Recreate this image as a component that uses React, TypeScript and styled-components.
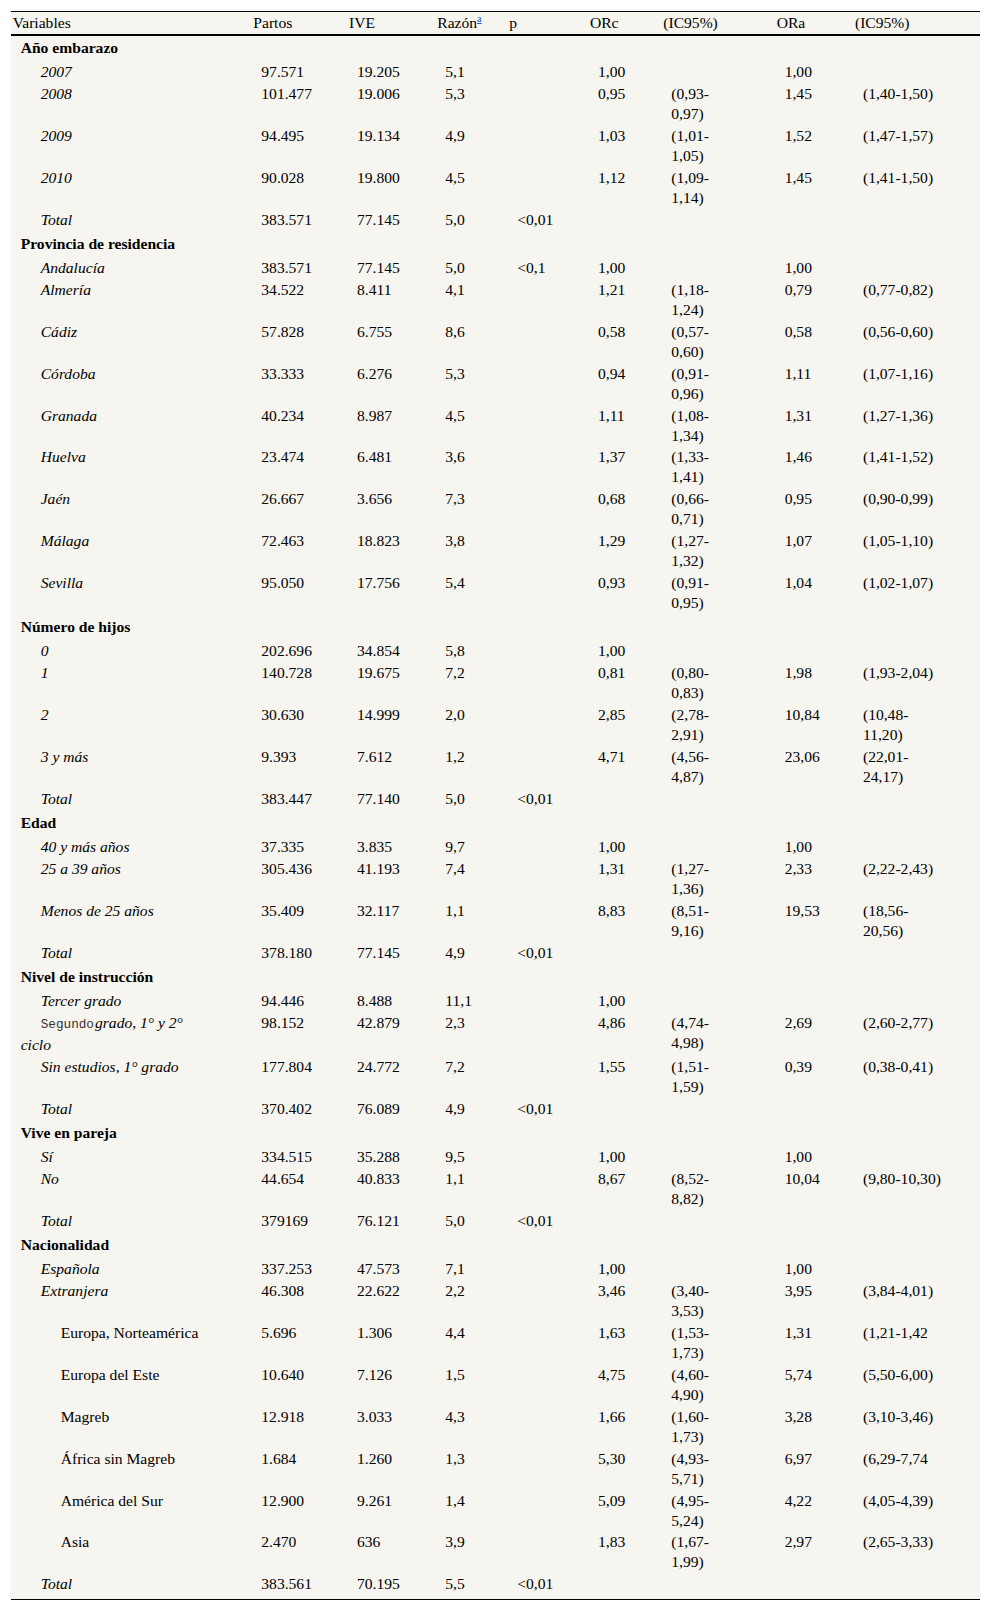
import React from 'react';
import styled, { createGlobalStyle } from 'styled-components';

const GlobalStyle = createGlobalStyle`
  html, body { margin: 0; padding: 0; background: #ffffff; }
  body { font-family: "Liberation Serif", "Times New Roman", serif; color: #000; }
`;

const Page = styled.div`
  padding: 11px 12px 12px 11px;
`;

const Table = styled.table`
  width: 969px;
  border-collapse: separate;
  border-spacing: 0;
  table-layout: fixed;
  background: #f7f5ef;
  font-size: 15.6px;
  line-height: 20px;
`;

const Col = styled.col<{ $w: number }>`
  width: ${p => p.$w}px;
`;

const HeadCell = styled.th`
  text-align: left;
  font-weight: normal;
  vertical-align: top;
  padding: 1px 2px 0.8px 1.7px;
  border-top: 1px solid #000;
  border-bottom: 2px solid #000;
  white-space: nowrap;
`;

const Sup = styled.sup`
  font-size: 10px;
  line-height: 0;
  vertical-align: 6px;
  a { color: #1f4fd1; text-decoration: underline; }
`;

const BodyRow = styled.tr<{ $end?: boolean }>`
  & > td {
    padding-bottom: ${p => (p.$end ? '2px' : '0.9px')};
  }
  &:last-child > td {
    padding-bottom: 5px;
    border-bottom: 1px solid #000;
  }
`;

const SectionCell = styled.td`
  font-weight: bold;
  vertical-align: top;
  padding: 2.3px 2px 3px 9.7px;
`;

const Cell = styled.td<{ $pr?: number }>`
  vertical-align: top;
  padding: 1px ${p => p.$pr ?? 2}px 0.9px 9.7px;
`;

const LabelCell = styled(Cell)<{ $level: number; $italic: boolean }>`
  text-indent: ${p => p.$level * 20}px;
  font-style: ${p => (p.$italic ? 'italic' : 'normal')};
`;

const Mono = styled.span`
  font-family: "Liberation Mono", "DejaVu Sans Mono", monospace;
  font-size: 12.7px;
  font-style: normal;
  color: #333;
  margin-right: 1px;
`;

type DataRow = {
  label: React.ReactNode;
  level?: number;
  plain?: boolean;
  end?: boolean;
  v: string[];
};

type Section = { title: string; rows: DataRow[] };

const sections: Section[] = [
  {
    title: 'Año embarazo',
    rows: [
      { label: '2007', v: ['97.571', '19.205', '5,1', '', '1,00', '', '1,00', ''] },
      { label: '2008', v: ['101.477', '19.006', '5,3', '', '0,95', '(0,93-0,97)', '1,45', '(1,40-1,50)'] },
      { label: '2009', v: ['94.495', '19.134', '4,9', '', '1,03', '(1,01-1,05)', '1,52', '(1,47-1,57)'] },
      { label: '2010', v: ['90.028', '19.800', '4,5', '', '1,12', '(1,09-1,14)', '1,45', '(1,41-1,50)'] },
      { label: 'Total', end: true, v: ['383.571', '77.145', '5,0', '<0,01', '', '', '', ''] },
    ],
  },
  {
    title: 'Provincia de residencia',
    rows: [
      { label: 'Andalucía', v: ['383.571', '77.145', '5,0', '<0,1', '1,00', '', '1,00', ''] },
      { label: 'Almería', v: ['34.522', '8.411', '4,1', '', '1,21', '(1,18-1,24)', '0,79', '(0,77-0,82)'] },
      { label: 'Cádiz', v: ['57.828', '6.755', '8,6', '', '0,58', '(0,57-0,60)', '0,58', '(0,56-0,60)'] },
      { label: 'Córdoba', v: ['33.333', '6.276', '5,3', '', '0,94', '(0,91-0,96)', '1,11', '(1,07-1,16)'] },
      { label: 'Granada', v: ['40.234', '8.987', '4,5', '', '1,11', '(1,08-1,34)', '1,31', '(1,27-1,36)'] },
      { label: 'Huelva', v: ['23.474', '6.481', '3,6', '', '1,37', '(1,33-1,41)', '1,46', '(1,41-1,52)'] },
      { label: 'Jaén', v: ['26.667', '3.656', '7,3', '', '0,68', '(0,66-0,71)', '0,95', '(0,90-0,99)'] },
      { label: 'Málaga', v: ['72.463', '18.823', '3,8', '', '1,29', '(1,27-1,32)', '1,07', '(1,05-1,10)'] },
      { label: 'Sevilla', end: true, v: ['95.050', '17.756', '5,4', '', '0,93', '(0,91-0,95)', '1,04', '(1,02-1,07)'] },
    ],
  },
  {
    title: 'Número de hijos',
    rows: [
      { label: '0', v: ['202.696', '34.854', '5,8', '', '1,00', '', '', ''] },
      { label: '1', v: ['140.728', '19.675', '7,2', '', '0,81', '(0,80-0,83)', '1,98', '(1,93-2,04)'] },
      { label: '2', v: ['30.630', '14.999', '2,0', '', '2,85', '(2,78-2,91)', '10,84', '(10,48-11,20)'] },
      { label: '3 y más', v: ['9.393', '7.612', '1,2', '', '4,71', '(4,56-4,87)', '23,06', '(22,01-24,17)'] },
      { label: 'Total', end: true, v: ['383.447', '77.140', '5,0', '<0,01', '', '', '', ''] },
    ],
  },
  {
    title: 'Edad',
    rows: [
      { label: '40 y más años', v: ['37.335', '3.835', '9,7', '', '1,00', '', '1,00', ''] },
      { label: '25 a 39 años', v: ['305.436', '41.193', '7,4', '', '1,31', '(1,27-1,36)', '2,33', '(2,22-2,43)'] },
      { label: 'Menos de 25 años', v: ['35.409', '32.117', '1,1', '', '8,83', '(8,51-9,16)', '19,53', '(18,56-20,56)'] },
      { label: 'Total', end: true, v: ['378.180', '77.145', '4,9', '<0,01', '', '', '', ''] },
    ],
  },
  {
    title: 'Nivel de instrucción',
    rows: [
      { label: 'Tercer grado', v: ['94.446', '8.488', '11,1', '', '1,00', '', '', ''] },
      {
        label: (
          <>
            <Mono>Segundo</Mono>grado, 1° y 2° ciclo
          </>
        ),
        v: ['98.152', '42.879', '2,3', '', '4,86', '(4,74-4,98)', '2,69', '(2,60-2,77)'],
      },
      { label: 'Sin estudios, 1° grado', v: ['177.804', '24.772', '7,2', '', '1,55', '(1,51-1,59)', '0,39', '(0,38-0,41)'] },
      { label: 'Total', end: true, v: ['370.402', '76.089', '4,9', '<0,01', '', '', '', ''] },
    ],
  },
  {
    title: 'Vive en pareja',
    rows: [
      { label: 'Sí', v: ['334.515', '35.288', '9,5', '', '1,00', '', '1,00', ''] },
      { label: 'No', v: ['44.654', '40.833', '1,1', '', '8,67', '(8,52-8,82)', '10,04', '(9,80-10,30)'] },
      { label: 'Total', end: true, v: ['379169', '76.121', '5,0', '<0,01', '', '', '', ''] },
    ],
  },
  {
    title: 'Nacionalidad',
    rows: [
      { label: 'Española', v: ['337.253', '47.573', '7,1', '', '1,00', '', '1,00', ''] },
      { label: 'Extranjera', v: ['46.308', '22.622', '2,2', '', '3,46', '(3,40-3,53)', '3,95', '(3,84-4,01)'] },
      { label: 'Europa, Norteamérica', level: 2, plain: true, v: ['5.696', '1.306', '4,4', '', '1,63', '(1,53-1,73)', '1,31', '(1,21-1,42'] },
      { label: 'Europa del Este', level: 2, plain: true, v: ['10.640', '7.126', '1,5', '', '4,75', '(4,60-4,90)', '5,74', '(5,50-6,00)'] },
      { label: 'Magreb', level: 2, plain: true, v: ['12.918', '3.033', '4,3', '', '1,66', '(1,60-1,73)', '3,28', '(3,10-3,46)'] },
      { label: 'África sin Magreb', level: 2, plain: true, v: ['1.684', '1.260', '1,3', '', '5,30', '(4,93-5,71)', '6,97', '(6,29-7,74'] },
      { label: 'América del Sur', level: 2, plain: true, v: ['12.900', '9.261', '1,4', '', '5,09', '(4,95-5,24)', '4,22', '(4,05-4,39)'] },
      { label: 'Asia', level: 2, plain: true, v: ['2.470', '636', '3,9', '', '1,83', '(1,67-1,99)', '2,97', '(2,65-3,33)'] },
      { label: 'Total', end: true, v: ['383.561', '70.195', '5,5', '<0,01', '', '', '', ''] },
    ],
  },
];

const widths = [240.6, 95.7, 88.3, 72, 80.7, 73.3, 113.4, 78.3, 126.7];
// right padding on data columns (index in v array) that limits wrap width
const rightPad: Record<number, number> = { 5: 39.7, 7: 35 };

export default function App() {
  return (
    <Page>
      <GlobalStyle />
      <Table>
        <colgroup>
          {widths.map((w, i) => (
            <Col key={i} $w={w} />
          ))}
        </colgroup>
        <thead>
          <tr>
            <HeadCell>Variables</HeadCell>
            <HeadCell>Partos</HeadCell>
            <HeadCell>IVE</HeadCell>
            <HeadCell>
              Razón
              <Sup>
                <a href="#tfn1">a</a>
              </Sup>
            </HeadCell>
            <HeadCell>p</HeadCell>
            <HeadCell>ORc</HeadCell>
            <HeadCell>(IC95%)</HeadCell>
            <HeadCell>ORa</HeadCell>
            <HeadCell>(IC95%)</HeadCell>
          </tr>
        </thead>
        <tbody>
          {sections.map(sec => (
            <React.Fragment key={sec.title}>
              <tr>
                <SectionCell colSpan={9}>{sec.title}</SectionCell>
              </tr>
              {sec.rows.map((r, ri) => (
                <BodyRow key={ri} $end={r.end}>
                  <LabelCell $pr={40.9} $level={r.level ?? 1} $italic={!r.plain}>
                    {r.label}
                  </LabelCell>
                  {r.v.map((val, vi) => (
                    <Cell key={vi} $pr={rightPad[vi]}>
                      {val}
                    </Cell>
                  ))}
                </BodyRow>
              ))}
            </React.Fragment>
          ))}
        </tbody>
      </Table>
    </Page>
  );
}
